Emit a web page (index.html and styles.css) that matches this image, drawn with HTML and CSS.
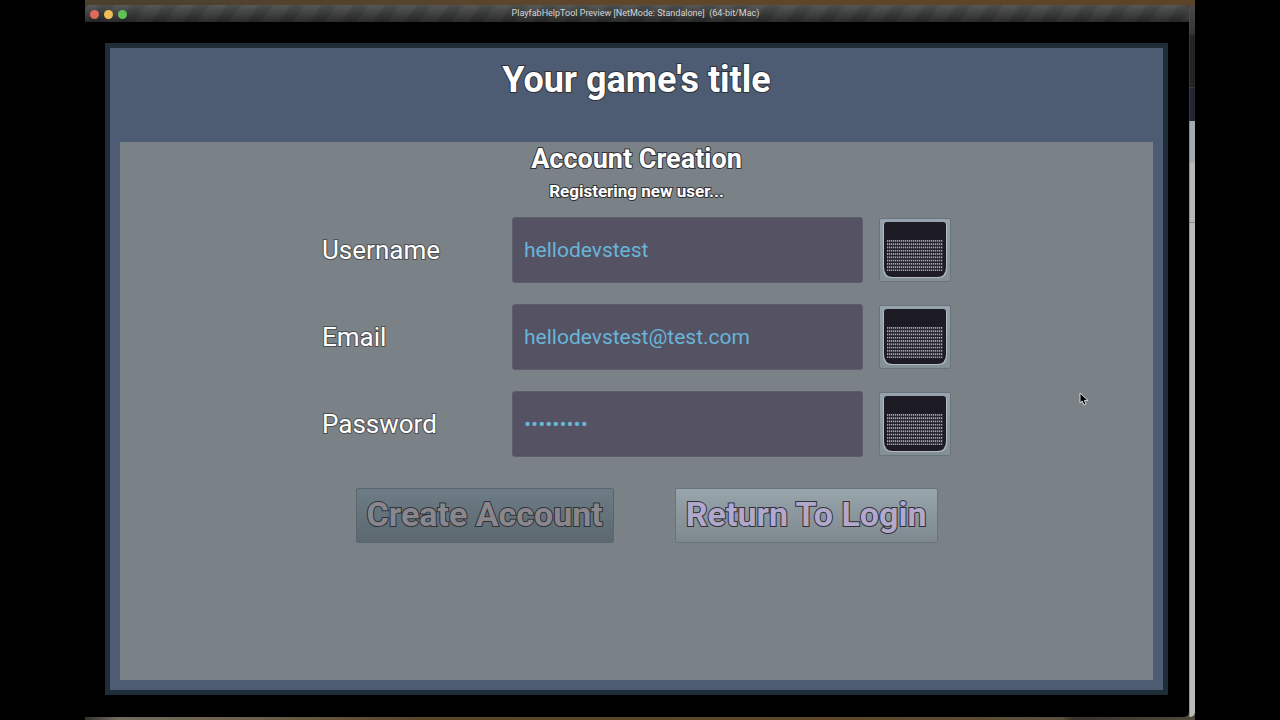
FILE: index.html
```html
<!DOCTYPE html>
<html lang="en">
<head>
<meta charset="utf-8">
<meta name="viewport" content="width=device-width, initial-scale=1">
<title>PlayfabHelpTool Preview</title>
<link rel="stylesheet" href="styles.css">
</head>
<body>
<svg class="defs" aria-hidden="true">
  <defs>
    <pattern id="keys" width="2" height="4" patternUnits="userSpaceOnUse" patternTransform="translate(7 21) scale(1 .82)">
      <rect width="1.3" height="2.2" fill="#a4a4ac"/>
    </pattern>
    <symbol id="keyboard" viewBox="0 0 70 62">
      <path d="M3 8q0-5 5-5h54q5 0 5 5v41q0 10-9 10H12q-9 0-9-10z" fill="#b4bac3"/>
      <path d="M4 6q0-3 3-3h56q3 0 3 3v42q0 10-9 10H13q-9 0-9-10z" fill="#1d1c25"/>
      <rect x="7" y="21" width="56" height="31" fill="url(#keys)"/>
    </symbol>
  </defs>
</svg>
<div class="desktop">
  <main class="window">
    <header class="titlebar">
      <div class="lights"><span class="light close"></span><span class="light minimise"></span><span class="light zoom"></span></div>
      <span class="window-title">PlayfabHelpTool Preview [NetMode: Standalone]&nbsp; (64-bit/Mac)</span>
    </header>
    <div class="viewport">
      <div class="frame">
        <h1 class="game-title">Your game's title</h1>
        <section class="panel">
          <h2 class="heading">Account Creation</h2>
          <p class="status">Registering new user...</p>
          <form class="form">
            <div class="fields">
              <label class="label" for="username">Username</label>
              <input class="input" id="username" type="text" value="hellodevstest">
              <button class="key-button" type="button" aria-label="Keyboard for username"><svg class="key-icon"><use href="#keyboard"/></svg></button>
              <label class="label" for="email">Email</label>
              <input class="input" id="email" type="email" value="hellodevstest@test.com">
              <button class="key-button" type="button" aria-label="Keyboard for email"><svg class="key-icon"><use href="#keyboard"/></svg></button>
              <label class="label" for="password">Password</label>
              <input class="input" id="password" type="password" value="password1">
              <button class="key-button" type="button" aria-label="Keyboard for password"><svg class="key-icon"><use href="#keyboard"/></svg></button>
            </div>
            <div class="actions">
              <button class="action" type="submit" disabled>Create Account</button>
              <button class="action" type="button">Return To Login</button>
            </div>
          </form>
          <svg class="cursor" viewBox="0 0 10 14" aria-hidden="true"><path d="M1 1v10l2.2-2 1.8 4 2-1-1.6-3.6H9z" fill="#000" stroke="#d8d8d8" stroke-width="1"/></svg>
        </section>
      </div>
    </div>
  </main>
  <div class="behind"></div>
</div>
</body>
</html>
```
FILE: styles.css
```css
* { box-sizing: border-box; }

body {
  margin: 0;
  padding: 0 85px;
  background: #000;
  color: #fff;
  font-family: Roboto, "Liberation Sans", sans-serif;
}

.defs { position: absolute; width: 0; height: 0; }

.desktop {
  display: flex;
  min-height: 100vh;
  padding: 5px 0 3px;
  background:
    linear-gradient(90deg, #4a402e, #60472b 50%, #5c4429) top / 100% 50% no-repeat,
    linear-gradient(90deg, #35322f, #716c5e 3%, #6b604a 15%, #5a4529 30%, #5f482a 70%, #5b503c 88%, #37332c 89%, #51493c) bottom / 100% 50% no-repeat;
}

.window {
  flex: 1;
  display: flex;
  flex-direction: column;
  background: #000;
  border-radius: 4px 4px 5px 0;
}

.titlebar {
  display: grid;
  grid-template-columns: 1fr auto 1fr;
  align-items: start;
  height: 17px;
  padding: 0 8px 0 5px;
  border-radius: 4px 4px 0 0;
  background:
    linear-gradient(#ffffff18, #00000060),
    repeating-linear-gradient(125deg, #454646 0 10px, #3a3b3b 14px 22px, #454646 26px);
}

.lights { display: flex; gap: 5px; padding-top: 5px; }
.light { width: 9px; height: 9px; border-radius: 50%; }
.close { background: #e0695e; }
.minimise { background: #f0bc57; }
.zoom { background: #61c158; }

.window-title { font-size: 9px; line-height: 16px; color: #d4d4d4; }

.viewport {
  flex: 1;
  display: flex;
  padding: 21px 21px 22px 20px;
}

.frame {
  flex: 1;
  display: flex;
  flex-direction: column;
  padding: 10px;
  border: 5px solid #1f2d38;
  background: #4e5c73;
}

.game-title, .heading, .status, .label, .action {
  margin: 0;
  -webkit-text-stroke: 2px #303238;
  paint-order: stroke fill;
}

.game-title {
  height: 84px;
  font-size: 36px;
  line-height: 44px;
  font-weight: 700;
  text-align: center;
}

.panel {
  position: relative;
  flex: 1;
  background: #7a8287;
  text-align: center;
}

.heading { font-size: 27px; line-height: 34px; font-weight: 700; }
.status { font-size: 17px; line-height: 30px; font-weight: 700; }

.form {
  display: flex;
  flex-direction: column;
  align-items: center;
  gap: 31px;
  padding-top: 11px;
}

.fields {
  display: grid;
  grid-template-columns: 190px 351px 88px;
  grid-auto-rows: 66px;
  row-gap: 21px;
  text-align: left;
}

.label {
  align-self: center;
  font-size: 26px;
  line-height: 32px;
  -webkit-text-stroke-color: #4c5054;
}

.input {
  padding: 0 11px;
  border: 1px solid #5c5c6b;
  border-radius: 3px;
  outline: 0;
  background: #545263;
  color: #68b5d8;
  font-family: inherit;
  font-size: 21px;
}

.key-button {
  align-self: center;
  justify-self: end;
  display: flex;
  width: 72px;
  height: 64px;
  padding: 0;
  border: 1px solid #68737a;
  border-radius: 2px;
  background: linear-gradient(#97a4ad, #838f95);
}

.key-icon { width: 70px; height: 62px; }

.actions { display: flex; gap: 61px; padding-left: 20px; }

.action {
  height: 55px;
  padding: 0 10px 3px;
  border: 1px solid #67747b;
  border-radius: 2px;
  background: linear-gradient(#98a5ac, #7e898e);
  color: #b1a8cb;
  font: 700 34px/50px Roboto, "Liberation Sans", sans-serif;
}

.action:disabled {
  border-color: #59666d;
  background: linear-gradient(#6d7c85, #5b6870);
  color: #89878d;
}

.cursor {
  position: absolute;
  left: 92.8%;
  top: 250px;
  width: 10px;
  height: 14px;
}

.behind {
  width: 6px;
  border-radius: 0 4px 5px 0;
  background: linear-gradient(#46484a, #343638 29px, #242425 30px 82px, #3b3b3d 82px 83px, #242731 83px 116px, #a4acb1 116px 158px, #b7b8b6 158px 217px, #888 217px 218px, #babab8 218px);
  border-left: 1px solid #55565666;
}
```
